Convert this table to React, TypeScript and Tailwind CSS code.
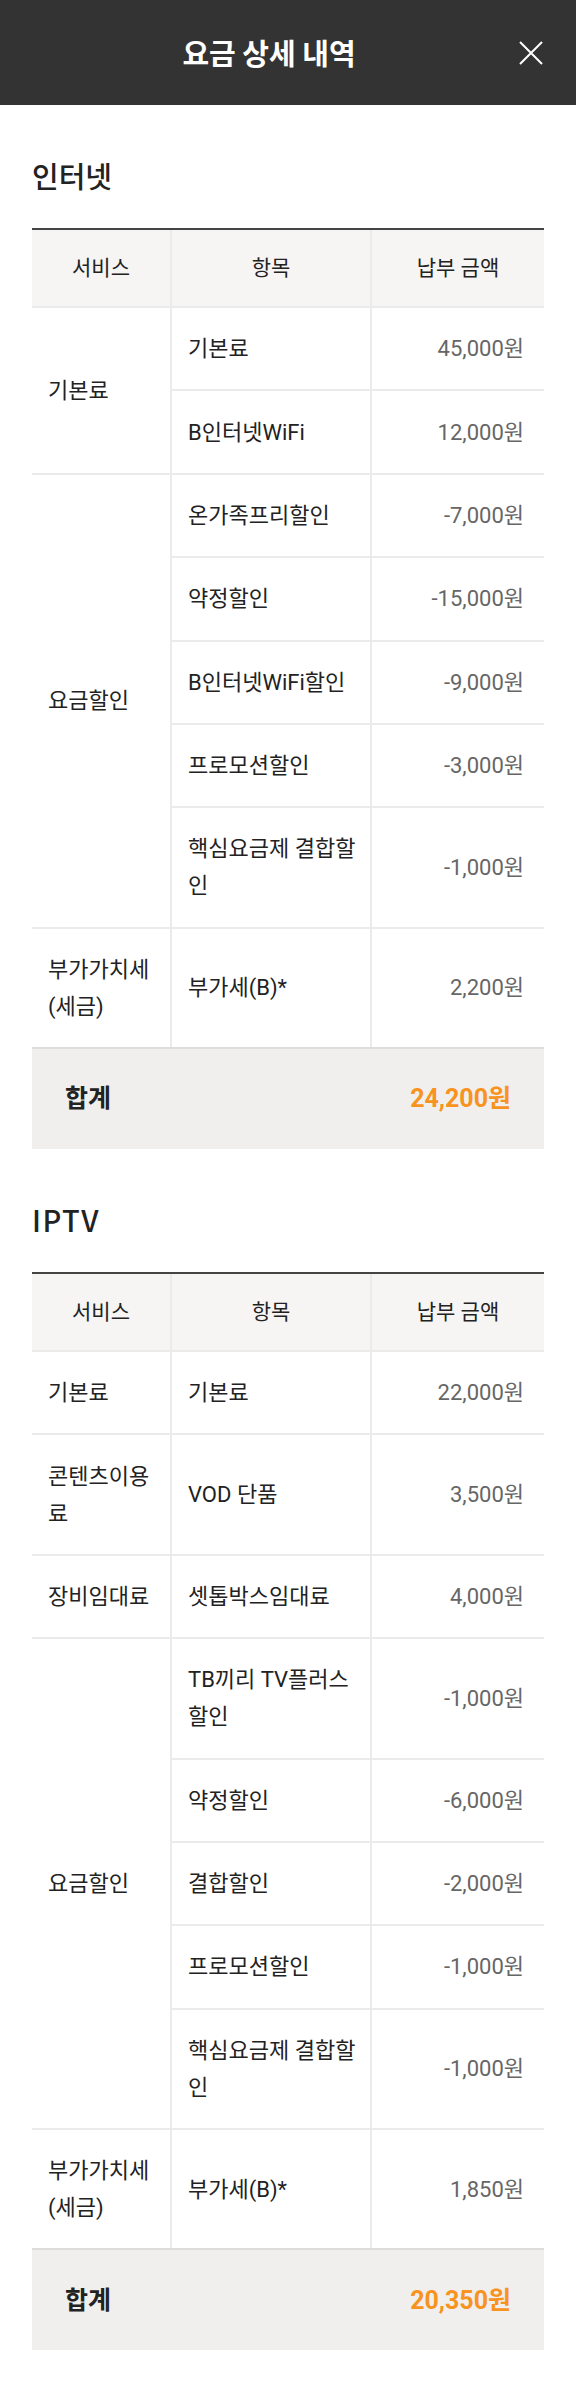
import React from "react"

type Item = { name: string; amount: string }
type Group = { service: string; items: Item[] }
type Section = { title: string; latin?: boolean; groups: Group[]; total: string }

const sections: Section[] = [
  {
    title: "인터넷",
    groups: [
      {
        service: "기본료",
        items: [
          { name: "기본료", amount: "45,000원" },
          { name: "B인터넷WiFi", amount: "12,000원" },
        ],
      },
      {
        service: "요금할인",
        items: [
          { name: "온가족프리할인", amount: "-7,000원" },
          { name: "약정할인", amount: "-15,000원" },
          { name: "B인터넷WiFi할인", amount: "-9,000원" },
          { name: "프로모션할인", amount: "-3,000원" },
          { name: "핵심요금제 결합할인", amount: "-1,000원" },
        ],
      },
      {
        service: "부가가치세(세금)",
        items: [{ name: "부가세(B)*", amount: "2,200원" }],
      },
    ],
    total: "24,200원",
  },
  {
    title: "IPTV",
    latin: true,
    groups: [
      { service: "기본료", items: [{ name: "기본료", amount: "22,000원" }] },
      { service: "콘텐츠이용료", items: [{ name: "VOD 단품", amount: "3,500원" }] },
      { service: "장비임대료", items: [{ name: "셋톱박스임대료", amount: "4,000원" }] },
      {
        service: "요금할인",
        items: [
          { name: "TB끼리 TV플러스할인", amount: "-1,000원" },
          { name: "약정할인", amount: "-6,000원" },
          { name: "결합할인", amount: "-2,000원" },
          { name: "프로모션할인", amount: "-1,000원" },
          { name: "핵심요금제 결합할인", amount: "-1,000원" },
        ],
      },
      {
        service: "부가가치세(세금)",
        items: [{ name: "부가세(B)*", amount: "1,850원" }],
      },
    ],
    total: "20,350원",
  },
]

function BillTable({ section }: { section: Section }) {
  const lastGroup = section.groups.length - 1

  return (
    <div>
      <div className="border-t-2 border-[#444444]">
        <table className="w-full table-fixed border-separate border-spacing-0 text-[22px] text-[#222222]">
          <colgroup>
            <col className="w-[140px]" />
            <col className="w-[200px]" />
            <col className="w-[172px]" />
          </colgroup>
          <thead>
            <tr className="bg-[#f6f5f3] text-[21px]">
              <th className="border-b-2 border-r-2 border-[#ebebeb] py-[20px] text-center font-normal leading-[36px]">
                서비스
              </th>
              <th className="border-b-2 border-r-2 border-[#ebebeb] py-[20px] text-center font-normal leading-[36px]">
                항목
              </th>
              <th className="border-b-2 border-[#ebebeb] py-[20px] text-center font-normal leading-[36px]">
                납부 금액
              </th>
            </tr>
          </thead>
          <tbody>
            {section.groups.map((group, gi) =>
              group.items.map((item, ii) => {
                const isLast = gi === lastGroup && ii === group.items.length - 1
                const rowBorder = isLast ? "" : "border-b-2"
                return (
                  <tr key={`${gi}-${ii}`}>
                    {ii === 0 && (
                      <td
                        rowSpan={group.items.length}
                        className={`${gi === lastGroup ? "" : "border-b-2"} border-r-2 border-[#ebebeb] py-[22.2px] pl-[16px] pr-[16px] align-middle leading-[37px]`}
                      >
                        {group.service}
                      </td>
                    )}
                    <td className={`${rowBorder} border-r-2 border-[#ebebeb] py-[22.2px] pl-[16px] pr-[8px] align-middle leading-[37px]`}>
                      {item.name}
                    </td>
                    <td className={`${rowBorder} border-[#ebebeb] py-[22.2px] pr-[20px] text-right align-middle leading-[37px] text-[#666666]`}>
                      {item.amount}
                    </td>
                  </tr>
                )
              })
            )}
          </tbody>
        </table>
      </div>
      <div className="flex h-[102px] items-center justify-between border-t-2 border-[#dddddd] bg-[#f0efed] px-[33px]">
        <span className="text-[25px] font-bold text-[#222222]">합계</span>
        <span className="text-[25px] font-bold text-[#f7931e]">{section.total}</span>
      </div>
    </div>
  )
}

export default function App() {
  return (
    <div
      className="min-h-[2400px] w-[576px] bg-white"
      style={{ fontFamily: 'Roboto, "Noto Sans CJK KR", sans-serif' }}
    >
      {/* Header */}
      <div className="flex h-[105px] items-center bg-[#333333] pl-[19px] pr-[33px]">
        <h1
          className="flex-1 text-center text-[29px] font-bold text-white"
          style={{ fontFamily: '"Noto Sans CJK KR", sans-serif' }}
        >
          요금 상세 내역
        </h1>
        <button className="flex h-[24px] w-[24px] items-center justify-center">
          <svg width="24" height="24" viewBox="0 0 24 24" fill="none">
            <path d="M1 1L23 23M23 1L1 23" stroke="white" strokeWidth="2" />
          </svg>
        </button>
      </div>

      {/* Sections */}
      <div className="px-[32px]">
        {sections.map((section) => (
          <div key={section.title} className="pt-[52px]">
            <h2
              className={`mb-[35px] text-[29px] font-medium leading-[36px] text-[#222222] ${section.latin ? "tracking-[1.5px]" : ""}`}
              style={{ fontFamily: '"Noto Sans CJK KR", sans-serif' }}
            >
              {section.title}
            </h2>
            <BillTable section={section} />
          </div>
        ))}
      </div>
    </div>
  )
}
